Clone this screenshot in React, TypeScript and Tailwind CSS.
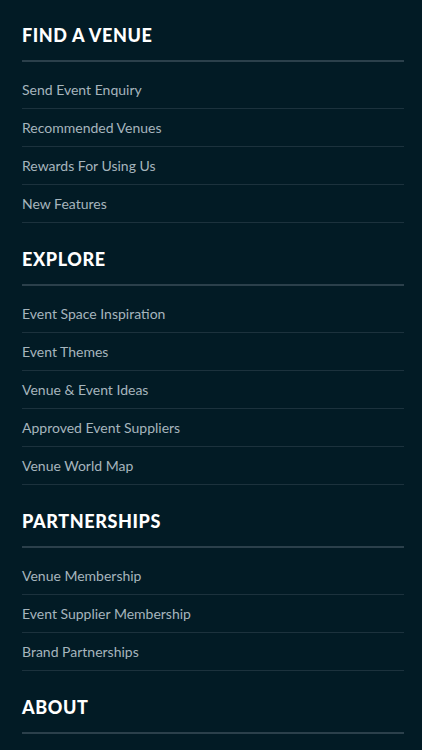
import React from "react";

const sections = [
  { title: "FIND A VENUE", items: ["Send Event Enquiry", "Recommended Venues", "Rewards For Using Us", "New Features"] },
  { title: "EXPLORE", items: ["Event Space Inspiration", "Event Themes", "Venue & Event Ideas", "Approved Event Suppliers", "Venue World Map"] },
  { title: "PARTNERSHIPS", items: ["Venue Membership", "Event Supplier Membership", "Brand Partnerships"] },
  { title: "ABOUT", items: [] as string[] },
];

export default function App() {
  return (
    <div className="min-h-[750px] w-[422px] bg-[#021b25] pl-[22px] pr-[18px] overflow-hidden" style={{ fontFamily: "Lato, 'Noto Sans', sans-serif" }}>
      {sections.map((s, i) => (
        <div key={s.title}>
          <div className={`${i === 0 ? "pt-[22px]" : "pt-[23px]"} pb-[12px] border-b-2 border-[#2b404b]`}>
            <h2 className="h-[26px] leading-[26px] text-[18px] font-black tracking-[0.6px] text-white">{s.title}</h2>
          </div>
          {s.items.length > 0 && (
            <ul className="pt-[9px]">
              {s.items.map((it) => (
                <li key={it} className="h-[38px] border-b border-[#1c323d] flex items-center text-[14px] text-[#a6b5bd]">
                  {it}
                </li>
              ))}
            </ul>
          )}
        </div>
      ))}
    </div>
  );
}
